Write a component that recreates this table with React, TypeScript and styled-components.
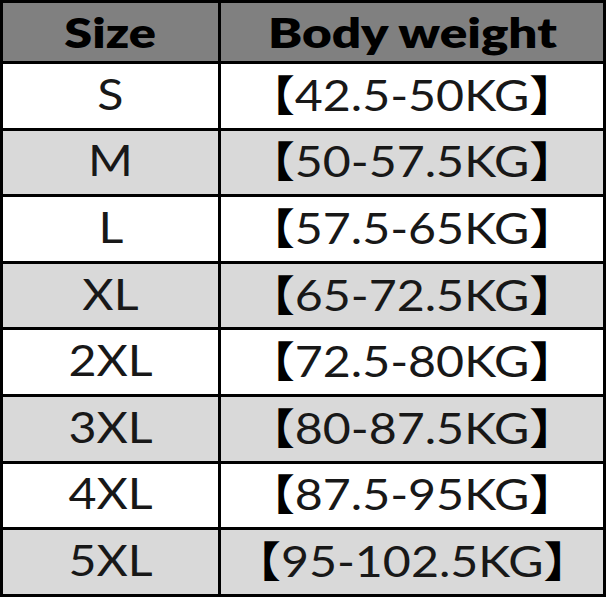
import React from "react";
import styled, { createGlobalStyle } from "styled-components";

const Global = createGlobalStyle`
  html, body { margin: 0; padding: 0; background: #ffffff; }
  body { font-family: Lato, "Noto Sans CJK SC", sans-serif; }
`;

const Table = styled.div`
  display: grid;
  grid-template-columns: 215px 382px;
  grid-template-rows: 58px repeat(8, 63.6px);
  gap: 3px;
  width: 606px;
  box-sizing: border-box;
  background: #000;
  border: 3px solid #000;
`;

const Cell = styled.div<{ $tone: "head" | "light" | "white" }>`
  display: flex;
  align-items: center;
  justify-content: center;
  background: ${(p) =>
    p.$tone === "head" ? "#808080" : p.$tone === "light" ? "#d9d9d9" : "#ffffff"};
  color: ${(p) => (p.$tone === "head" ? "#000" : "#181818")};
  font-family: Lato, "Noto Sans CJK SC", sans-serif;
  font-size: 42px;
  font-weight: ${(p) => (p.$tone === "head" ? 800 : 400)};
  line-height: 1;
  padding-bottom: ${(p) => (p.$tone === "head" ? "0" : "4px")};
  box-sizing: border-box;
  white-space: nowrap;
`;

const Label = styled.span<{ $stretch: number }>`
  display: inline-block;
  transform: scaleX(${(p) => p.$stretch});
  transform-origin: center;
`;

const Bracket = styled.span`
  font-family: "Noto Sans CJK SC", sans-serif;
  font-weight: 700;
  color: #000;
`;

const rows: [string, string][] = [
  ["S", "42.5-50KG"],
  ["M", "50-57.5KG"],
  ["L", "57.5-65KG"],
  ["XL", "65-72.5KG"],
  ["2XL", "72.5-80KG"],
  ["3XL", "80-87.5KG"],
  ["4XL", "87.5-95KG"],
  ["5XL", "95-102.5KG"],
];

export default function App() {
  return (
    <>
      <Global />
      <Table>
        <Cell $tone="head">
          <Label $stretch={1.2}>Size</Label>
        </Cell>
        <Cell $tone="head">
          <Label $stretch={1.22}>Body weight</Label>
        </Cell>
        {rows.map(([size, weight], i) => {
          const tone = i % 2 === 0 ? "white" : "light";
          return (
            <React.Fragment key={size}>
              <Cell $tone={tone}>
                <Label $stretch={1.15}>{size}</Label>
              </Cell>
              <Cell $tone={tone}>
                <Label $stretch={1.15}>
                  <Bracket>【</Bracket>
                  {weight}
                  <Bracket>】</Bracket>
                </Label>
              </Cell>
            </React.Fragment>
          );
        })}
      </Table>
    </>
  );
}
